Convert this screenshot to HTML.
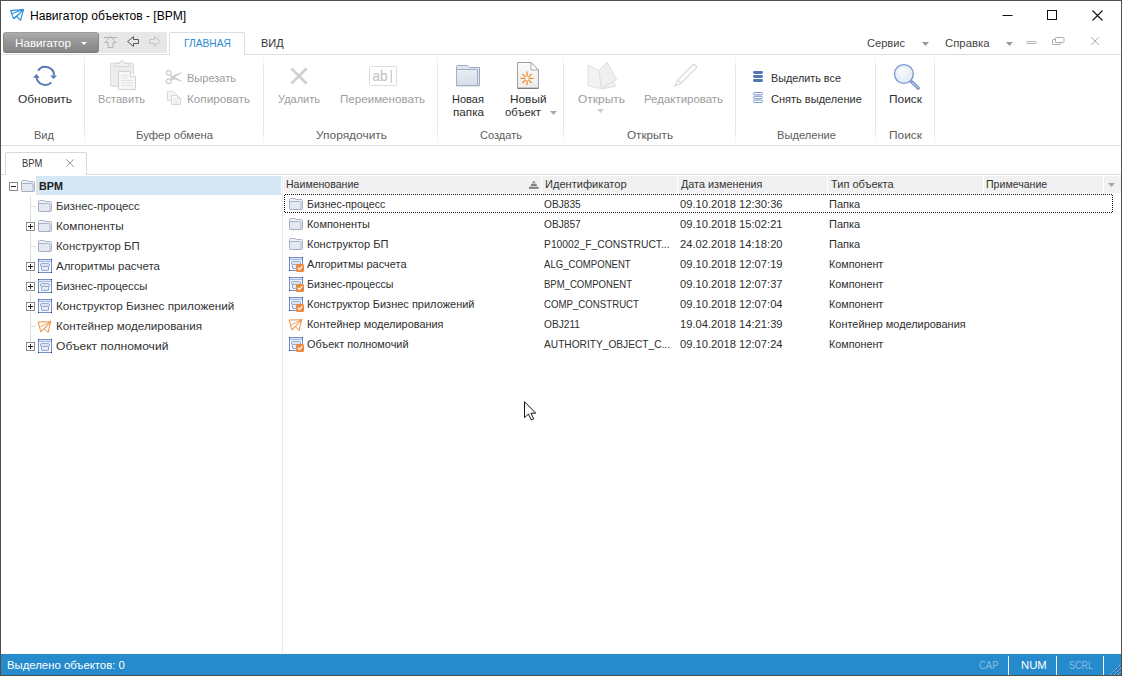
<!DOCTYPE html>
<html lang="ru">
<head>
<meta charset="utf-8">
<title>Навигатор объектов - [BPM]</title>
<style>
html,body{margin:0;padding:0;}
body{width:1122px;height:676px;position:relative;overflow:hidden;background:#fff;font-family:"Liberation Sans",sans-serif;}
.a{position:absolute;}
.t{position:absolute;white-space:nowrap;line-height:16px;transform-origin:0 50%;}
#frame{left:0;top:0;width:1120px;height:674px;border:1px solid #524e4b;z-index:50;pointer-events:none;}
.vs{position:absolute;top:55px;width:1px;height:89px;background:linear-gradient(#fdfdfd,#e5e6e8 14%,#e5e6e8 84%,#fcfcfc);}
svg{position:absolute;overflow:visible;}
.hs{position:absolute;top:176px;width:1px;height:17px;background:#fdfdfd;}
</style>
</head>
<body>
<div id="frame" class="a"></div>

<!-- ribbon tab row -->
<div class="a" style="left:1px;top:54px;width:1120px;height:1px;background:#dedfdf"></div>
<div class="a" style="left:99px;top:32px;width:68px;height:21px;background:#e7e7e7"></div>
<div class="a" style="left:3px;top:32px;width:94px;height:19px;border:1px solid #878787;border-top-color:#9c9c9c;border-bottom-color:#787878;border-radius:3px;background:linear-gradient(#ababab,#949494 50%,#858585);"></div>
<div class="a" style="left:169px;top:32px;width:76px;height:23px;border:1px solid #dcddde;border-bottom:none;border-radius:2px 2px 0 0;background:#fff;box-sizing:border-box"></div>

<!-- ribbon body -->
<div class="vs" style="left:84px"></div>
<div class="vs" style="left:263px"></div>
<div class="vs" style="left:437px"></div>
<div class="vs" style="left:563px"></div>
<div class="vs" style="left:735px"></div>
<div class="vs" style="left:875px"></div>
<div class="vs" style="left:934px"></div>
<div class="a" style="left:1px;top:145px;width:1120px;height:1px;background:#dedede"></div>

<!-- doc tab strip -->
<div class="a" style="left:1px;top:174px;width:1120px;height:1px;background:#dcddd6"></div>
<div class="a" style="left:5px;top:152px;width:82px;height:23px;border:1px solid #d9d9d9;border-bottom:none;border-radius:2px 2px 0 0;background:#fff;box-sizing:border-box"></div>

<!-- tree -->
<div class="a" style="left:36px;top:176px;width:245px;height:19px;background:#d6e7f5"></div>
<div class="a" style="left:30px;top:196px;width:1px;height:151px;background:#dedede"></div>
<div class="a" style="left:282px;top:176px;width:1px;height:478px;background:#e8e8e8"></div>

<!-- list header -->
<div class="a" style="left:284px;top:176px;width:837px;height:17px;background:#f1f1f1"></div>
<div class="hs" style="left:541px"></div>
<div class="hs" style="left:677px"></div>
<div class="hs" style="left:827px"></div>
<div class="hs" style="left:983px"></div>
<div class="hs" style="left:1103px"></div>
<!-- focus rect -->
<svg style="left:284px;top:194px" width="830" height="19" viewBox="0 0 830 19"><g stroke="#111" stroke-width="1" stroke-dasharray="1 1" fill="none"><path d="M1 0.5 H828"/><path d="M1 18.5 H828"/><path d="M0.5 1 V18"/><path d="M828.5 1 V18"/></g></svg>

<!-- status bar -->
<div class="a" style="left:1px;top:653px;width:1120px;height:1px;background:#f9f6f0"></div>
<div class="a" style="left:1px;top:654px;width:1120px;height:21px;background:#268bcc"></div>
<div class="a" style="left:1008px;top:656px;width:1px;height:19px;background:#eef4f9"></div>
<div class="a" style="left:1056px;top:656px;width:1px;height:19px;background:#eef4f9"></div>
<div class="a" style="left:1103px;top:656px;width:1px;height:19px;background:#eef4f9"></div>

<svg style="left:10px;top:9px" width="14" height="12" viewBox="0 0 14 12" ><g fill="none" stroke="#2b8fd6" stroke-width="1.2" stroke-linejoin="round" stroke-linecap="round"><path d="M0.6 1.6 L13.5 0.6 L10.5 11.3 L6.8 7.4 L3.6 9.6 Z"/><path d="M13.5 0.6 L2.2 4.4 M13.5 0.6 L6.8 7.4 M13.5 0.6 L3.6 9.6" stroke-width="1.02"/></g></svg>
<svg style="left:1002px;top:10px" width="12" height="12" viewBox="0 0 12 12" ><path d="M0.5 5.5 H10.5" stroke="#111" stroke-width="1" fill="none"/></svg>
<svg style="left:1047px;top:10px" width="12" height="12" viewBox="0 0 12 12" ><rect x="0.5" y="0.5" width="9" height="9" stroke="#111" stroke-width="1" fill="none"/></svg>
<svg style="left:1092px;top:10px" width="12" height="12" viewBox="0 0 12 12" ><path d="M0.5 0.5 L10.5 10.5 M10.5 0.5 L0.5 10.5" stroke="#111" stroke-width="1.1" fill="none"/></svg>
<svg style="left:81px;top:42px" width="6" height="3" viewBox="0 0 6 3" ><path d="M0 0 H6 L3 3 Z" fill="#fff"/></svg>
<svg style="left:104px;top:36px" width="14" height="12" viewBox="0 0 14 12" ><g fill="none" stroke="#b2b2b2" stroke-width="1"><path d="M0 1.5 H13"/><path d="M6.5 0.5 L12 6.5 H9 V11.5 H4 V6.5 H1 Z"/></g></svg>
<svg style="left:127px;top:36px" width="12" height="11" viewBox="0 0 12 11" ><path d="M0.6 5.5 L6.5 0.6 V3.5 H11.5 V7.5 H6.5 V10.4 Z" fill="none" stroke="#585858" stroke-width="1" stroke-linejoin="miter"/></svg>
<svg style="left:149px;top:36px" width="12" height="11" viewBox="0 0 12 11" ><path d="M11.4 5.5 L5.5 0.6 V3.5 H0.5 V7.5 H5.5 V10.4 Z" fill="none" stroke="#c4c4c4" stroke-width="1"/></svg>
<svg style="left:922px;top:42px" width="8" height="4" viewBox="0 0 8 4" ><path d="M0 0 H7 L3.5 4 Z" fill="#9a9a9a"/></svg>
<svg style="left:1006px;top:42px" width="8" height="4" viewBox="0 0 8 4" ><path d="M0 0 H7 L3.5 4 Z" fill="#9a9a9a"/></svg>
<svg style="left:1026px;top:41px" width="12" height="4" viewBox="0 0 12 4" ><rect x="0.5" y="0.5" width="10" height="2" rx="1" fill="none" stroke="#b0b0b0"/></svg>
<svg style="left:1052px;top:37px" width="13" height="9" viewBox="0 0 13 9" ><g fill="#fff" stroke="#adadad"><rect x="0.5" y="2.5" width="8" height="5" rx="0.6"/><rect x="3.5" y="0.5" width="8.5" height="5" rx="0.6"/></g></svg>
<svg style="left:1091px;top:37px" width="8" height="8" viewBox="0 0 8 8" ><path d="M0.2 0.2 L8 8 M8 0.2 L0.2 8" stroke="#aaaaaa" stroke-width="1" fill="none"/></svg>
<svg style="left:32px;top:63px" width="26" height="26" viewBox="0 0 26 26" ><g fill="none" stroke="#5878b6" stroke-width="2" stroke-linecap="butt">
<path d="M6.1 7.6 A8.8 8.8 0 0 1 22.1 12.6"/>
<path d="M4.5 14 A8.8 8.8 0 0 0 19.4 19.4"/></g>
<path d="M18.2 12.4 H25 L21.5 16 Z" fill="#5878b6"/>
<path d="M1 14.7 H7.8 L4.3 11 Z" fill="#5878b6"/></svg>
<svg style="left:110px;top:60px" width="27" height="31" viewBox="0 0 27 31" ><rect x="0.5" y="3" width="23" height="23.5" rx="1.5" fill="#ececec" stroke="#dcdcdc"/>
<path d="M5 6.5 V4.5 Q5 3.5 6 3.5 H9.5 Q10 0.8 12 0.8 Q14 0.8 14.5 3.5 H18 Q19 3.5 19 4.5 V6.5 Z" fill="#f2f2f2" stroke="#cfcfcf" stroke-width="0.8"/>
<path d="M8.5 11.5 H20.5 L25.5 16.5 V29.5 H8.5 Z" fill="#f6f6f6" stroke="#d2d2d2"/>
<path d="M20.5 11.5 V16.5 H25.5" fill="#fff" stroke="#d2d2d2"/>
<path d="M11 15.5 H18 M11 18 H18 M11 20.5 H23 M11 23 H23 M11 25.5 H23" stroke="#e0e0e0" stroke-width="0.8"/></svg>
<svg style="left:165px;top:69px" width="18" height="16" viewBox="0 0 18 16" ><g fill="none" stroke="#cdcdcd" stroke-width="1.3">
<circle cx="3.7" cy="3.9" r="2.4"/><circle cx="3.7" cy="12.3" r="2.4"/></g>
<path d="M5.6 5.4 L16.8 12 L16.4 12.7 L10 10.6 L5.6 11 Z" fill="#cdcdcd"/>
<path d="M5.6 10.8 L16.8 4 L16.4 3.3 L10 5.6 L6.2 9 Z" fill="#cdcdcd"/></svg>
<svg style="left:167px;top:91px" width="15" height="15" viewBox="0 0 15 15" ><path d="M0.5 0.5 H6.5 L9.5 3.5 V9.5 H0.5 Z" fill="#f4f4f4" stroke="#dcdcdc"/>
<path d="M4.5 4.5 H10.5 L13.5 7.5 V13.5 H4.5 Z" fill="#f7f7f7" stroke="#d8d8d8"/>
<path d="M10.5 4.5 V7.5 H13.5" fill="none" stroke="#d8d8d8"/>
<path d="M6.5 8 H9 M6.5 10 H11.5 M6.5 12 H11.5" stroke="#e2e2e2" stroke-width="0.8"/></svg>
<svg style="left:290px;top:67px" width="18" height="18" viewBox="0 0 18 18" ><path d="M1.5 1.5 L16.5 16.5 M16.5 1.5 L1.5 16.5" stroke="#cfcfcf" stroke-width="2.6" fill="none"/></svg>
<svg style="left:369px;top:66px" width="28" height="20" viewBox="0 0 28 20" ><rect x="0.5" y="0.5" width="27" height="19" rx="1" fill="#fff" stroke="#dedede"/>
<text x="3.4" y="14.9" font-family="Liberation Sans, sans-serif" font-size="14.5" fill="#bdbdbd" textLength="15" lengthAdjust="spacingAndGlyphs">ab</text>
<path d="M22.2 4 V17" stroke="#bdbdbd" stroke-width="1"/></svg>
<svg style="left:455px;top:64px" width="27" height="24" viewBox="0 0 27 24" ><defs><linearGradient id="fg" x1="0" y1="0" x2="0" y2="1"><stop offset="0" stop-color="#e9edf4"/><stop offset="1" stop-color="#d6dce8"/></linearGradient></defs>
<path d="M1.5 21.5 V2.5 Q1.5 1.5 2.5 1.5 H12.5 L14.5 3.5 H24.5 V21.5 Z" fill="#dfe4ee" stroke="#9ea8c0" stroke-width="1"/>
<path d="M1.5 21.5 V5.5 H22.5 V21.5 Z" fill="url(#fg)" stroke="#a3adc4" stroke-width="1"/>
<path d="M0.5 22.6 H25.5" stroke="#d0d0d0" stroke-width="1" opacity="0.6"/></svg>
<svg style="left:517px;top:62px" width="23" height="28" viewBox="0 0 23 28" ><defs><linearGradient id="pg" x1="0" y1="0" x2="0" y2="1"><stop offset="0" stop-color="#fbfbfb"/><stop offset="1" stop-color="#ececec"/></linearGradient></defs>
<path d="M0.5 0.5 H14 L21.5 8 V26 H0.5 Z" fill="url(#pg)" stroke="#a0a0a0" stroke-width="1"/>
<path d="M14 0.5 V8 H21.5 Z" fill="#fff" stroke="#a8a8a8" stroke-width="1" stroke-linejoin="round"/>
<path d="M0.5 26.5 H21.5" stroke="#7e7e7e" stroke-width="1"/>
<g stroke="#f08a24" stroke-width="1.2" stroke-linecap="butt">
<path d="M10 9.6 V14.6 M10 18.2 V23.2 M3.4 16.4 H8.2 M11.8 16.4 H16.6 M5.4 11.8 L8.7 15.1 M11.3 17.7 L14.6 21 M14.6 11.8 L11.3 15.1 M8.7 17.7 L5.4 21"/></g></svg>
<svg style="left:550px;top:111px" width="8" height="4" viewBox="0 0 8 4" ><path d="M0 0 H7 L3.5 4 Z" fill="#a8a8a8"/></svg>
<svg style="left:587px;top:61px" width="31" height="29" viewBox="0 0 31 29" ><g stroke="#dcdcdc" stroke-width="0.9" stroke-linejoin="round">
<path d="M15.5 27 L26 20.5 L29 25 L14.5 28 Z" fill="#f1f1f1"/>
<path d="M1 4 L12 9.5 L14.5 27.5 L1 25 Z" fill="#f3f3f3"/>
<path d="M12 9.5 L20 1 L29.5 18.5 L14.5 27.5 Z" fill="#efefef"/></g></svg>
<svg style="left:597px;top:109px" width="8" height="4" viewBox="0 0 8 4" ><path d="M0 0 H7 L3.5 4 Z" fill="#cdcdcd"/></svg>
<svg style="left:672px;top:63px" width="26" height="26" viewBox="0 0 26 26" ><g transform="rotate(-45 13 13)" stroke="#d4d4d4" stroke-width="1" fill="#fbfbfb">
<path d="M-1.5 13 L5 10.6 H26 Q28 10.6 28 13 Q28 15.4 26 15.4 H5 Z"/>
<path d="M5 10.6 V15.4" fill="none"/></g></svg>
<svg style="left:753px;top:71px" width="10" height="11" viewBox="0 0 10 11" ><g fill="#5677b2"><rect x="0" y="0" width="10" height="3" rx="1.4"/><rect x="0" y="4" width="10" height="3" rx="1.4"/><rect x="0" y="8" width="10" height="3" rx="1.4"/></g></svg>
<svg style="left:753px;top:92px" width="10" height="11" viewBox="0 0 10 11" ><g fill="#fff" stroke="#6c8cc8" stroke-width="0.9"><rect x="0.5" y="0.5" width="9" height="2.4" rx="1.2"/><rect x="0.5" y="4.3" width="9" height="2.4" rx="1.2"/><rect x="0.5" y="8.1" width="9" height="2.4" rx="1.2"/></g></svg>
<svg style="left:892px;top:62px" width="31" height="30" viewBox="0 0 31 30" ><defs><radialGradient id="lg" cx="0.4" cy="0.35" r="0.7"><stop offset="0" stop-color="#f7fafd"/><stop offset="1" stop-color="#dde7f3"/></radialGradient></defs>
<path d="M19.6 19.8 L26.2 26" stroke="#6f8fc6" stroke-width="3.3" stroke-linecap="round"/>
<path d="M19.9 20.1 L26 25.8" stroke="#b9cbe8" stroke-width="1.2" stroke-linecap="round"/>
<circle cx="11.9" cy="12" r="9.4" fill="url(#lg)" stroke="#7f9cce" stroke-width="1.4"/></svg>
<svg style="left:66px;top:159px" width="8" height="8" viewBox="0 0 8 8" ><path d="M0.3 0.3 L7.7 7.7 M7.7 0.3 L0.3 7.7" stroke="#9a9a9a" stroke-width="1" fill="none"/></svg>
<svg style="left:9px;top:182px" width="9" height="9" viewBox="0 0 9 9" ><rect x="0.5" y="0.5" width="8" height="8" fill="#fff" stroke="#8c8c8c"/><path d="M2 4.5 H7" stroke="#222"/></svg>
<svg style="left:26px;top:222px" width="9" height="9" viewBox="0 0 9 9" ><rect x="0.5" y="0.5" width="8" height="8" fill="#fff" stroke="#8c8c8c"/><path d="M2 4.5 H7" stroke="#222"/><path d="M4.5 2 V7" stroke="#222"/></svg>
<svg style="left:26px;top:262px" width="9" height="9" viewBox="0 0 9 9" ><rect x="0.5" y="0.5" width="8" height="8" fill="#fff" stroke="#8c8c8c"/><path d="M2 4.5 H7" stroke="#222"/><path d="M4.5 2 V7" stroke="#222"/></svg>
<svg style="left:26px;top:282px" width="9" height="9" viewBox="0 0 9 9" ><rect x="0.5" y="0.5" width="8" height="8" fill="#fff" stroke="#8c8c8c"/><path d="M2 4.5 H7" stroke="#222"/><path d="M4.5 2 V7" stroke="#222"/></svg>
<svg style="left:26px;top:302px" width="9" height="9" viewBox="0 0 9 9" ><rect x="0.5" y="0.5" width="8" height="8" fill="#fff" stroke="#8c8c8c"/><path d="M2 4.5 H7" stroke="#222"/><path d="M4.5 2 V7" stroke="#222"/></svg>
<svg style="left:26px;top:342px" width="9" height="9" viewBox="0 0 9 9" ><rect x="0.5" y="0.5" width="8" height="8" fill="#fff" stroke="#8c8c8c"/><path d="M2 4.5 H7" stroke="#222"/><path d="M4.5 2 V7" stroke="#222"/></svg>
<div class="a" style="left:31px;top:206px;width:5px;height:1px;background:#dedede"></div>
<div class="a" style="left:31px;top:246px;width:5px;height:1px;background:#dedede"></div>
<div class="a" style="left:31px;top:326px;width:5px;height:1px;background:#dedede"></div>
<svg style="left:21px;top:180px" width="14" height="12" viewBox="0 0 14 12" ><path d="M0.5 10.5 V1.6 Q0.5 0.5 1.6 0.5 H6 Q6.8 0.5 7.2 1.5 H12.4 Q13.5 1.5 13.5 2.6 V10.4 Q13.5 11.5 12.4 11.5 H1.6 Q0.5 11.5 0.5 10.5 Z" fill="#eef1f6" stroke="#a0a8c0" stroke-width="0.85"/>
<path d="M0.5 10.4 V3.5 H10.9 Q12 3.5 12 4.6 V11.5 H1.6 Q0.5 11.5 0.5 10.4 Z" fill="#e4e9f1" stroke="#a0a8c0" stroke-width="0.85"/></svg>
<svg style="left:38px;top:200px" width="14" height="12" viewBox="0 0 14 12" ><path d="M0.5 10.5 V1.6 Q0.5 0.5 1.6 0.5 H6 Q6.8 0.5 7.2 1.5 H12.4 Q13.5 1.5 13.5 2.6 V10.4 Q13.5 11.5 12.4 11.5 H1.6 Q0.5 11.5 0.5 10.5 Z" fill="#eef1f6" stroke="#a0a8c0" stroke-width="0.85"/>
<path d="M0.5 10.4 V3.5 H10.9 Q12 3.5 12 4.6 V11.5 H1.6 Q0.5 11.5 0.5 10.4 Z" fill="#e4e9f1" stroke="#a0a8c0" stroke-width="0.85"/></svg>
<svg style="left:289px;top:198px" width="14" height="12" viewBox="0 0 14 12" ><path d="M0.5 10.5 V1.6 Q0.5 0.5 1.6 0.5 H6 Q6.8 0.5 7.2 1.5 H12.4 Q13.5 1.5 13.5 2.6 V10.4 Q13.5 11.5 12.4 11.5 H1.6 Q0.5 11.5 0.5 10.5 Z" fill="#eef1f6" stroke="#a0a8c0" stroke-width="0.85"/>
<path d="M0.5 10.4 V3.5 H10.9 Q12 3.5 12 4.6 V11.5 H1.6 Q0.5 11.5 0.5 10.4 Z" fill="#e4e9f1" stroke="#a0a8c0" stroke-width="0.85"/></svg>
<svg style="left:38px;top:220px" width="14" height="12" viewBox="0 0 14 12" ><path d="M0.5 10.5 V1.6 Q0.5 0.5 1.6 0.5 H6 Q6.8 0.5 7.2 1.5 H12.4 Q13.5 1.5 13.5 2.6 V10.4 Q13.5 11.5 12.4 11.5 H1.6 Q0.5 11.5 0.5 10.5 Z" fill="#eef1f6" stroke="#a0a8c0" stroke-width="0.85"/>
<path d="M0.5 10.4 V3.5 H10.9 Q12 3.5 12 4.6 V11.5 H1.6 Q0.5 11.5 0.5 10.4 Z" fill="#e4e9f1" stroke="#a0a8c0" stroke-width="0.85"/></svg>
<svg style="left:289px;top:218px" width="14" height="12" viewBox="0 0 14 12" ><path d="M0.5 10.5 V1.6 Q0.5 0.5 1.6 0.5 H6 Q6.8 0.5 7.2 1.5 H12.4 Q13.5 1.5 13.5 2.6 V10.4 Q13.5 11.5 12.4 11.5 H1.6 Q0.5 11.5 0.5 10.5 Z" fill="#eef1f6" stroke="#a0a8c0" stroke-width="0.85"/>
<path d="M0.5 10.4 V3.5 H10.9 Q12 3.5 12 4.6 V11.5 H1.6 Q0.5 11.5 0.5 10.4 Z" fill="#e4e9f1" stroke="#a0a8c0" stroke-width="0.85"/></svg>
<svg style="left:38px;top:240px" width="14" height="12" viewBox="0 0 14 12" ><path d="M0.5 10.5 V1.6 Q0.5 0.5 1.6 0.5 H6 Q6.8 0.5 7.2 1.5 H12.4 Q13.5 1.5 13.5 2.6 V10.4 Q13.5 11.5 12.4 11.5 H1.6 Q0.5 11.5 0.5 10.5 Z" fill="#eef1f6" stroke="#a0a8c0" stroke-width="0.85"/>
<path d="M0.5 10.4 V3.5 H10.9 Q12 3.5 12 4.6 V11.5 H1.6 Q0.5 11.5 0.5 10.4 Z" fill="#e4e9f1" stroke="#a0a8c0" stroke-width="0.85"/></svg>
<svg style="left:289px;top:238px" width="14" height="12" viewBox="0 0 14 12" ><path d="M0.5 10.5 V1.6 Q0.5 0.5 1.6 0.5 H6 Q6.8 0.5 7.2 1.5 H12.4 Q13.5 1.5 13.5 2.6 V10.4 Q13.5 11.5 12.4 11.5 H1.6 Q0.5 11.5 0.5 10.5 Z" fill="#eef1f6" stroke="#a0a8c0" stroke-width="0.85"/>
<path d="M0.5 10.4 V3.5 H10.9 Q12 3.5 12 4.6 V11.5 H1.6 Q0.5 11.5 0.5 10.4 Z" fill="#e4e9f1" stroke="#a0a8c0" stroke-width="0.85"/></svg>
<svg style="left:38px;top:259px" width="15" height="15" viewBox="0 0 15 15" ><rect x="0.5" y="0.5" width="13" height="13" fill="#f6f9fd" stroke="#7490c8"/>
<rect x="1" y="1" width="12" height="1.6" fill="#dbe7f8"/>
<path d="M1 2.6 H13" stroke="#93aee0" stroke-width="0.9"/>
<path d="M3.5 7.4 V10.9 Q3.5 11.4 4 11.4 H10 Q10.5 11.4 10.5 10.9 V7.4" fill="#e6ecf5" stroke="#8a9ac2" stroke-width="0.9"/>
<rect x="2.4" y="4.6" width="9.2" height="2.8" rx="1.3" fill="#e6ecf5" stroke="#8a9ac2" stroke-width="0.9"/>
<g fill="#2a2f3a"><rect x="0" y="0" width="1" height="1"/><rect x="13" y="0" width="1" height="1"/><rect x="0" y="13" width="1" height="1"/><rect x="13" y="13" width="1" height="1"/></g></svg>
<svg style="left:289px;top:257px" width="15" height="15" viewBox="0 0 15 15" ><rect x="0.5" y="0.5" width="13" height="13" fill="#f6f9fd" stroke="#7490c8"/>
<rect x="1" y="1" width="12" height="1.6" fill="#dbe7f8"/>
<path d="M1 2.6 H13" stroke="#93aee0" stroke-width="0.9"/>
<path d="M3.5 7.4 V10.9 Q3.5 11.4 4 11.4 H10 Q10.5 11.4 10.5 10.9 V7.4" fill="#e6ecf5" stroke="#8a9ac2" stroke-width="0.9"/>
<rect x="2.4" y="4.6" width="9.2" height="2.8" rx="1.3" fill="#e6ecf5" stroke="#8a9ac2" stroke-width="0.9"/>
<g fill="#2a2f3a"><rect x="0" y="0" width="1" height="1"/><rect x="13" y="0" width="1" height="1"/><rect x="0" y="13" width="1" height="1"/><rect x="13" y="13" width="1" height="1"/></g><rect x="7" y="7" width="8" height="8" rx="1.6" fill="#e8883c"/><path d="M8.8 10.8 L10.5 12.6 L13.4 9.2" fill="none" stroke="#fff" stroke-width="1.3"/></svg>
<svg style="left:38px;top:279px" width="15" height="15" viewBox="0 0 15 15" ><rect x="0.5" y="0.5" width="13" height="13" fill="#f6f9fd" stroke="#7490c8"/>
<rect x="1" y="1" width="12" height="1.6" fill="#dbe7f8"/>
<path d="M1 2.6 H13" stroke="#93aee0" stroke-width="0.9"/>
<path d="M3.5 7.4 V10.9 Q3.5 11.4 4 11.4 H10 Q10.5 11.4 10.5 10.9 V7.4" fill="#e6ecf5" stroke="#8a9ac2" stroke-width="0.9"/>
<rect x="2.4" y="4.6" width="9.2" height="2.8" rx="1.3" fill="#e6ecf5" stroke="#8a9ac2" stroke-width="0.9"/>
<g fill="#2a2f3a"><rect x="0" y="0" width="1" height="1"/><rect x="13" y="0" width="1" height="1"/><rect x="0" y="13" width="1" height="1"/><rect x="13" y="13" width="1" height="1"/></g></svg>
<svg style="left:289px;top:277px" width="15" height="15" viewBox="0 0 15 15" ><rect x="0.5" y="0.5" width="13" height="13" fill="#f6f9fd" stroke="#7490c8"/>
<rect x="1" y="1" width="12" height="1.6" fill="#dbe7f8"/>
<path d="M1 2.6 H13" stroke="#93aee0" stroke-width="0.9"/>
<path d="M3.5 7.4 V10.9 Q3.5 11.4 4 11.4 H10 Q10.5 11.4 10.5 10.9 V7.4" fill="#e6ecf5" stroke="#8a9ac2" stroke-width="0.9"/>
<rect x="2.4" y="4.6" width="9.2" height="2.8" rx="1.3" fill="#e6ecf5" stroke="#8a9ac2" stroke-width="0.9"/>
<g fill="#2a2f3a"><rect x="0" y="0" width="1" height="1"/><rect x="13" y="0" width="1" height="1"/><rect x="0" y="13" width="1" height="1"/><rect x="13" y="13" width="1" height="1"/></g><rect x="7" y="7" width="8" height="8" rx="1.6" fill="#e8883c"/><path d="M8.8 10.8 L10.5 12.6 L13.4 9.2" fill="none" stroke="#fff" stroke-width="1.3"/></svg>
<svg style="left:38px;top:299px" width="15" height="15" viewBox="0 0 15 15" ><rect x="0.5" y="0.5" width="13" height="13" fill="#f6f9fd" stroke="#7490c8"/>
<rect x="1" y="1" width="12" height="1.6" fill="#dbe7f8"/>
<path d="M1 2.6 H13" stroke="#93aee0" stroke-width="0.9"/>
<path d="M3.5 7.4 V10.9 Q3.5 11.4 4 11.4 H10 Q10.5 11.4 10.5 10.9 V7.4" fill="#e6ecf5" stroke="#8a9ac2" stroke-width="0.9"/>
<rect x="2.4" y="4.6" width="9.2" height="2.8" rx="1.3" fill="#e6ecf5" stroke="#8a9ac2" stroke-width="0.9"/>
<g fill="#2a2f3a"><rect x="0" y="0" width="1" height="1"/><rect x="13" y="0" width="1" height="1"/><rect x="0" y="13" width="1" height="1"/><rect x="13" y="13" width="1" height="1"/></g></svg>
<svg style="left:289px;top:297px" width="15" height="15" viewBox="0 0 15 15" ><rect x="0.5" y="0.5" width="13" height="13" fill="#f6f9fd" stroke="#7490c8"/>
<rect x="1" y="1" width="12" height="1.6" fill="#dbe7f8"/>
<path d="M1 2.6 H13" stroke="#93aee0" stroke-width="0.9"/>
<path d="M3.5 7.4 V10.9 Q3.5 11.4 4 11.4 H10 Q10.5 11.4 10.5 10.9 V7.4" fill="#e6ecf5" stroke="#8a9ac2" stroke-width="0.9"/>
<rect x="2.4" y="4.6" width="9.2" height="2.8" rx="1.3" fill="#e6ecf5" stroke="#8a9ac2" stroke-width="0.9"/>
<g fill="#2a2f3a"><rect x="0" y="0" width="1" height="1"/><rect x="13" y="0" width="1" height="1"/><rect x="0" y="13" width="1" height="1"/><rect x="13" y="13" width="1" height="1"/></g><rect x="7" y="7" width="8" height="8" rx="1.6" fill="#e8883c"/><path d="M8.8 10.8 L10.5 12.6 L13.4 9.2" fill="none" stroke="#fff" stroke-width="1.3"/></svg>
<svg style="left:37.5px;top:320.5px" width="14" height="13" viewBox="0 0 14 13" ><g fill="none" stroke="#ea9140" stroke-width="1.0" stroke-linejoin="round" stroke-linecap="round"><path d="M0.6 1.0 L12.6 0.8 L10.1 11.6 L6.5 7.6 L3.1 10.6 Z"/><path d="M12.6 0.8 L2.7 5.6 M12.6 0.8 L6.5 7.6 M12.6 0.8 L3.1 10.6" stroke-width="0.85"/></g></svg>
<svg style="left:288.5px;top:318.5px" width="14" height="13" viewBox="0 0 14 13" ><g fill="none" stroke="#ea9140" stroke-width="1.0" stroke-linejoin="round" stroke-linecap="round"><path d="M0.6 1.0 L12.6 0.8 L10.1 11.6 L6.5 7.6 L3.1 10.6 Z"/><path d="M12.6 0.8 L2.7 5.6 M12.6 0.8 L6.5 7.6 M12.6 0.8 L3.1 10.6" stroke-width="0.85"/></g></svg>
<svg style="left:38px;top:339px" width="15" height="15" viewBox="0 0 15 15" ><rect x="0.5" y="0.5" width="13" height="13" fill="#f6f9fd" stroke="#7490c8"/>
<rect x="1" y="1" width="12" height="1.6" fill="#dbe7f8"/>
<path d="M1 2.6 H13" stroke="#93aee0" stroke-width="0.9"/>
<path d="M3.5 7.4 V10.9 Q3.5 11.4 4 11.4 H10 Q10.5 11.4 10.5 10.9 V7.4" fill="#e6ecf5" stroke="#8a9ac2" stroke-width="0.9"/>
<rect x="2.4" y="4.6" width="9.2" height="2.8" rx="1.3" fill="#e6ecf5" stroke="#8a9ac2" stroke-width="0.9"/>
<g fill="#2a2f3a"><rect x="0" y="0" width="1" height="1"/><rect x="13" y="0" width="1" height="1"/><rect x="0" y="13" width="1" height="1"/><rect x="13" y="13" width="1" height="1"/></g></svg>
<svg style="left:289px;top:337px" width="15" height="15" viewBox="0 0 15 15" ><rect x="0.5" y="0.5" width="13" height="13" fill="#f6f9fd" stroke="#7490c8"/>
<rect x="1" y="1" width="12" height="1.6" fill="#dbe7f8"/>
<path d="M1 2.6 H13" stroke="#93aee0" stroke-width="0.9"/>
<path d="M3.5 7.4 V10.9 Q3.5 11.4 4 11.4 H10 Q10.5 11.4 10.5 10.9 V7.4" fill="#e6ecf5" stroke="#8a9ac2" stroke-width="0.9"/>
<rect x="2.4" y="4.6" width="9.2" height="2.8" rx="1.3" fill="#e6ecf5" stroke="#8a9ac2" stroke-width="0.9"/>
<g fill="#2a2f3a"><rect x="0" y="0" width="1" height="1"/><rect x="13" y="0" width="1" height="1"/><rect x="0" y="13" width="1" height="1"/><rect x="13" y="13" width="1" height="1"/></g><rect x="7" y="7" width="8" height="8" rx="1.6" fill="#e8883c"/><path d="M8.8 10.8 L10.5 12.6 L13.4 9.2" fill="none" stroke="#fff" stroke-width="1.3"/></svg>
<svg style="left:529px;top:181px" width="10" height="8" viewBox="0 0 10 8" ><path d="M4.8 0 L9.4 6.4 H0.2 Z" fill="#a0a0a0" opacity="0.4"/><g fill="#7c7c7c"><rect x="4" y="0.2" width="1.6" height="1.2"/><rect x="3" y="1.4" width="3.6" height="0.9" opacity="0.6"/><rect x="2" y="3.1" width="5.6" height="1.8"/><rect x="0" y="6" width="9.6" height="1.8"/></g></svg>
<svg style="left:1108px;top:183px" width="8" height="4" viewBox="0 0 8 4" ><path d="M0 0 H7 L3.5 4 Z" fill="#a6a6a6"/></svg>
<svg style="left:1109px;top:663px" width="12" height="12" viewBox="0 0 12 12" ><g stroke="#1c69ad" stroke-width="1"><path d="M2 12 L12 2 M6 12 L12 6 M10 12 L12 10"/></g><g stroke="#d9cfb4" stroke-width="1" stroke-dasharray="1.1 1.1"><path d="M1 12 L12 1 M5 12 L12 5 M9 12 L12 9"/></g></svg>
<svg style="left:524px;top:401px" width="13" height="20" viewBox="0 0 13 20" ><path d="M0.5 0.7 V16.6 L4.4 13 L7.4 19 L9.7 17.9 L7 12.2 H11.8 Z" fill="#fff" stroke="#15151f" stroke-width="1" stroke-linejoin="miter"/></svg>

<span class="t" style="left:29.8px;top:7.8px;font-size:12px;color:#000;transform:scaleX(1.0049)">Навигатор объектов - [BPM]</span>
<span class="t" style="left:15.3px;top:35.2px;font-size:11px;color:#fff;transform:scaleX(1.0594)">Навигатор</span>
<span class="t" style="left:183.7px;top:35.2px;font-size:11px;color:#2a8dd4;transform:scaleX(0.9293)">ГЛАВНАЯ</span>
<span class="t" style="left:260.7px;top:35.2px;font-size:11px;color:#333;transform:scaleX(0.9999)">ВИД</span>
<span class="t" style="left:867.0px;top:35.2px;font-size:11px;color:#444;transform:scaleX(1.0087)">Сервис</span>
<span class="t" style="left:944.5px;top:35.2px;font-size:11px;color:#444;transform:scaleX(1.0311)">Справка</span>
<span class="t" style="left:18.0px;top:91.2px;font-size:11px;color:#2e2e2e;transform:scaleX(1.0841)">Обновить</span>
<span class="t" style="left:98.0px;top:91.2px;font-size:11px;color:#9d9d9d;transform:scaleX(1.0077)">Вставить</span>
<span class="t" style="left:187.0px;top:70.2px;font-size:11px;color:#9d9d9d;transform:scaleX(1.0013)">Вырезать</span>
<span class="t" style="left:187.0px;top:91.2px;font-size:11px;color:#9d9d9d;transform:scaleX(1.0636)">Копировать</span>
<span class="t" style="left:278.0px;top:91.2px;font-size:11px;color:#9d9d9d;transform:scaleX(1.0000)">Удалить</span>
<span class="t" style="left:340.0px;top:91.2px;font-size:11px;color:#9d9d9d;transform:scaleX(1.0539)">Переименовать</span>
<span class="t" style="left:452.0px;top:91.2px;font-size:11px;color:#2e2e2e;transform:scaleX(1.0044)">Новая</span>
<span class="t" style="left:453.0px;top:104.2px;font-size:11px;color:#2e2e2e;transform:scaleX(1.0615)">папка</span>
<span class="t" style="left:510.0px;top:91.2px;font-size:11px;color:#2e2e2e;transform:scaleX(1.0745)">Новый</span>
<span class="t" style="left:505.0px;top:104.2px;font-size:11px;color:#2e2e2e;transform:scaleX(1.0277)">объект</span>
<span class="t" style="left:578.0px;top:91.2px;font-size:11px;color:#9d9d9d;transform:scaleX(1.0879)">Открыть</span>
<span class="t" style="left:644.0px;top:91.2px;font-size:11px;color:#9d9d9d;transform:scaleX(1.0395)">Редактировать</span>
<span class="t" style="left:770.7px;top:70.2px;font-size:11px;color:#2e2e2e;transform:scaleX(0.9826)">Выделить все</span>
<span class="t" style="left:770.7px;top:91.2px;font-size:11px;color:#2e2e2e;transform:scaleX(1.0021)">Снять выделение</span>
<span class="t" style="left:889.0px;top:91.2px;font-size:11px;color:#2e2e2e;transform:scaleX(1.0825)">Поиск</span>
<span class="t" style="left:34.0px;top:127.2px;font-size:11px;color:#5e5e5e;transform:scaleX(1.0047)">Вид</span>
<span class="t" style="left:136.0px;top:127.2px;font-size:11px;color:#5e5e5e;transform:scaleX(1.0301)">Буфер обмена</span>
<span class="t" style="left:316.0px;top:127.2px;font-size:11px;color:#5e5e5e;transform:scaleX(1.0845)">Упорядочить</span>
<span class="t" style="left:480.0px;top:127.2px;font-size:11px;color:#5e5e5e;transform:scaleX(1.0045)">Создать</span>
<span class="t" style="left:627.0px;top:127.2px;font-size:11px;color:#5e5e5e;transform:scaleX(1.0647)">Открыть</span>
<span class="t" style="left:777.0px;top:127.2px;font-size:11px;color:#5e5e5e;transform:scaleX(1.0121)">Выделение</span>
<span class="t" style="left:889.0px;top:127.2px;font-size:11px;color:#5e5e5e;transform:scaleX(1.0825)">Поиск</span>
<span class="t" style="left:22.3px;top:155.2px;font-size:11px;color:#333;transform:scaleX(0.8514)">BPM</span>
<span class="t" style="left:39.0px;top:178.2px;font-size:11px;color:#222;font-weight:700;transform:scaleX(0.9815)">BPM</span>
<span class="t" style="left:56.4px;top:198.2px;font-size:11px;color:#333;transform:scaleX(1.0289)">Бизнес-процесс</span>
<span class="t" style="left:56.4px;top:218.2px;font-size:11px;color:#333;transform:scaleX(1.0667)">Компоненты</span>
<span class="t" style="left:56.4px;top:238.2px;font-size:11px;color:#333;transform:scaleX(1.0333)">Конструктор БП</span>
<span class="t" style="left:56.4px;top:258.2px;font-size:11px;color:#333;transform:scaleX(1.0431)">Алгоритмы расчета</span>
<span class="t" style="left:56.4px;top:278.2px;font-size:11px;color:#333;transform:scaleX(1.0252)">Бизнес-процессы</span>
<span class="t" style="left:56.4px;top:298.2px;font-size:11px;color:#333;transform:scaleX(1.0643)">Конструктор Бизнес приложений</span>
<span class="t" style="left:56.4px;top:318.2px;font-size:11px;color:#333;transform:scaleX(1.0627)">Контейнер моделирования</span>
<span class="t" style="left:56.4px;top:338.2px;font-size:11px;color:#333;transform:scaleX(1.0974)">Объект полномочий</span>
<span class="t" style="left:286.0px;top:176.2px;font-size:11px;color:#333;transform:scaleX(0.9598)">Наименование</span>
<span class="t" style="left:544.8px;top:176.2px;font-size:11px;color:#333;transform:scaleX(1.0076)">Идентификатор</span>
<span class="t" style="left:681.0px;top:176.2px;font-size:11px;color:#333;transform:scaleX(0.9836)">Дата изменения</span>
<span class="t" style="left:831.3px;top:176.2px;font-size:11px;color:#333;transform:scaleX(1.0029)">Тип объекта</span>
<span class="t" style="left:986.3px;top:176.2px;font-size:11px;color:#333;transform:scaleX(0.9612)">Примечание</span>
<span class="t" style="left:306.5px;top:196.2px;font-size:11px;color:#2e2e2e;transform:scaleX(0.9631)">Бизнес-процесс</span>
<span class="t" style="left:544.0px;top:196.2px;font-size:11px;color:#2e2e2e;transform:scaleX(0.9233)">OBJ835</span>
<span class="t" style="left:680.0px;top:196.2px;font-size:11px;color:#2e2e2e;transform:scaleX(1.0165)">09.10.2018 12:30:36</span>
<span class="t" style="left:829.3px;top:196.2px;font-size:11px;color:#2e2e2e;transform:scaleX(1.0014)">Папка</span>
<span class="t" style="left:306.5px;top:216.2px;font-size:11px;color:#2e2e2e;transform:scaleX(0.9925)">Компоненты</span>
<span class="t" style="left:544.0px;top:216.2px;font-size:11px;color:#2e2e2e;transform:scaleX(0.9233)">OBJ857</span>
<span class="t" style="left:680.0px;top:216.2px;font-size:11px;color:#2e2e2e;transform:scaleX(1.0165)">09.10.2018 15:02:21</span>
<span class="t" style="left:829.3px;top:216.2px;font-size:11px;color:#2e2e2e;transform:scaleX(1.0014)">Папка</span>
<span class="t" style="left:306.5px;top:236.2px;font-size:11px;color:#2e2e2e;transform:scaleX(1.0073)">Конструктор БП</span>
<span class="t" style="left:544.0px;top:236.2px;font-size:11px;color:#2e2e2e;transform:scaleX(0.9381)">P10002_F_CONSTRUCT...</span>
<span class="t" style="left:680.0px;top:236.2px;font-size:11px;color:#2e2e2e;transform:scaleX(1.0165)">24.02.2018 14:18:20</span>
<span class="t" style="left:829.3px;top:236.2px;font-size:11px;color:#2e2e2e;transform:scaleX(1.0014)">Папка</span>
<span class="t" style="left:306.5px;top:256.2px;font-size:11px;color:#2e2e2e;transform:scaleX(0.9989)">Алгоритмы расчета</span>
<span class="t" style="left:544.0px;top:256.2px;font-size:11px;color:#2e2e2e;transform:scaleX(0.8701)">ALG_COMPONENT</span>
<span class="t" style="left:680.0px;top:256.2px;font-size:11px;color:#2e2e2e;transform:scaleX(1.0165)">09.10.2018 12:07:19</span>
<span class="t" style="left:829.3px;top:256.2px;font-size:11px;color:#2e2e2e;transform:scaleX(0.9789)">Компонент</span>
<span class="t" style="left:306.5px;top:276.2px;font-size:11px;color:#2e2e2e;transform:scaleX(0.9702)">Бизнес-процессы</span>
<span class="t" style="left:544.0px;top:276.2px;font-size:11px;color:#2e2e2e;transform:scaleX(0.8673)">BPM_COMPONENT</span>
<span class="t" style="left:680.0px;top:276.2px;font-size:11px;color:#2e2e2e;transform:scaleX(1.0165)">09.10.2018 12:07:37</span>
<span class="t" style="left:829.3px;top:276.2px;font-size:11px;color:#2e2e2e;transform:scaleX(0.9789)">Компонент</span>
<span class="t" style="left:306.5px;top:296.2px;font-size:11px;color:#2e2e2e;transform:scaleX(0.9998)">Конструктор Бизнес приложений</span>
<span class="t" style="left:544.0px;top:296.2px;font-size:11px;color:#2e2e2e;transform:scaleX(0.8782)">COMP_CONSTRUCT</span>
<span class="t" style="left:680.0px;top:296.2px;font-size:11px;color:#2e2e2e;transform:scaleX(1.0165)">09.10.2018 12:07:04</span>
<span class="t" style="left:829.3px;top:296.2px;font-size:11px;color:#2e2e2e;transform:scaleX(0.9789)">Компонент</span>
<span class="t" style="left:306.5px;top:316.2px;font-size:11px;color:#2e2e2e;transform:scaleX(0.9922)">Контейнер моделирования</span>
<span class="t" style="left:544.0px;top:316.2px;font-size:11px;color:#2e2e2e;transform:scaleX(0.9246)">OBJ211</span>
<span class="t" style="left:680.0px;top:316.2px;font-size:11px;color:#2e2e2e;transform:scaleX(1.0165)">19.04.2018 14:21:39</span>
<span class="t" style="left:829.3px;top:316.2px;font-size:11px;color:#2e2e2e;transform:scaleX(0.9936)">Контейнер моделирования</span>
<span class="t" style="left:306.5px;top:336.2px;font-size:11px;color:#2e2e2e;transform:scaleX(0.9910)">Объект полномочий</span>
<span class="t" style="left:544.0px;top:336.2px;font-size:11px;color:#2e2e2e;transform:scaleX(0.9245)">AUTHORITY_OBJECT_C...</span>
<span class="t" style="left:680.0px;top:336.2px;font-size:11px;color:#2e2e2e;transform:scaleX(1.0165)">09.10.2018 12:07:24</span>
<span class="t" style="left:829.3px;top:336.2px;font-size:11px;color:#2e2e2e;transform:scaleX(0.9789)">Компонент</span>
<span class="t" style="left:7.0px;top:657.2px;font-size:11px;color:#fff;transform:scaleX(1.0306)">Выделено объектов: 0</span>
<span class="t" style="left:978.8px;top:657.2px;font-size:11px;color:#86bce2;transform:scaleX(0.8619)">CAP</span>
<span class="t" style="left:1020.6px;top:657.2px;font-size:11px;color:#fff;transform:scaleX(1.0254)">NUM</span>
<span class="t" style="left:1068.6px;top:657.2px;font-size:11px;color:#86bce2;transform:scaleX(0.8145)">SCRL</span>
</body>
</html>
